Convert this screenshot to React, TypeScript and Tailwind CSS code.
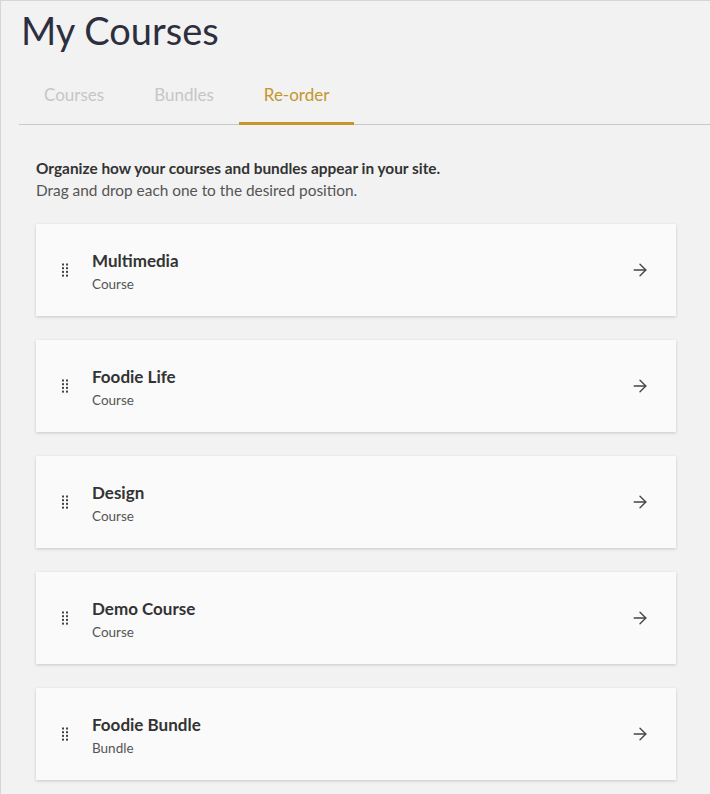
import React, { useState } from 'react';
import { ArrowRight } from 'lucide-react';

const items = [
  { title: 'Multimedia', kind: 'Course' },
  { title: 'Foodie Life', kind: 'Course' },
  { title: 'Design', kind: 'Course' },
  { title: 'Demo Course', kind: 'Course' },
  { title: 'Foodie Bundle', kind: 'Bundle' },
];

const tabs = ['Courses', 'Bundles', 'Re-order'];

function DragHandle() {
  return (
    <svg width="8" height="14" viewBox="0 0 8 14" className="text-[#444]">
      {[0, 1, 2, 3].map((r) =>
        [0, 1].map((c) => (
          <rect key={`${r}-${c}`} x={c * 4 + 1} y={r * 3.7 + 0.5} width="2" height="2" fill="currentColor" />
        ))
      )}
    </svg>
  );
}

export default function App() {
  const [active, setActive] = useState('Re-order');

  return (
    <div className="min-h-[794px] bg-[#f2f2f2] border-t border-l border-[#d6d6d6] font-['Lato','Liberation_Sans',sans-serif] pl-[18px]">
      <h1 className="ml-[2px] mt-[5px] text-[38px] leading-[48px] text-[#2d2f3f]">My Courses</h1>

      <div className="mt-[15px] flex border-b border-[#c9c9c9]">
        {tabs.map((t) => (
          <button
            key={t}
            onClick={() => setActive(t)}
            className={
              t === active
                ? 'h-[56px] px-[25px] pb-[2px] border-b-[3px] border-[#c4962c] -mb-px text-[17px] text-[#c4962c]'
                : 'h-[56px] px-[25px] pb-[2px] border-b-[3px] border-transparent -mb-px text-[17px] text-[#c6c6c6]'
            }
          >
            {t}
          </button>
        ))}
      </div>

      <div className="pl-[17px] pr-[34px]">
        <div className="mt-[32px] text-[15.4px] leading-[22px]">
          <p className="font-bold text-[#333]">Organize how your courses and bundles appear in your site.</p>
          <p className="text-[#555]">Drag and drop each one to the desired position.</p>
        </div>

        <div className="mt-[23px] flex flex-col gap-[24px] pb-[14px]">
          {items.map((it) => (
            <div
              key={it.title}
              className="h-[92px] bg-[#fafafa] shadow-[0_1px_3px_rgba(0,0,0,0.18)] flex items-center pl-[25px] pr-[26px]"
            >
              <DragHandle />
              <div className="ml-[23px] flex-1 pt-[4px]">
                <div className="text-[17px] leading-[24px] font-bold text-[#333]">{it.title}</div>
                <div className="text-[13.5px] leading-[22px] text-[#555]">{it.kind}</div>
              </div>
              <ArrowRight size={20} strokeWidth={1.6} className="text-[#444]" />
            </div>
          ))}
        </div>
      </div>
    </div>
  );
}
